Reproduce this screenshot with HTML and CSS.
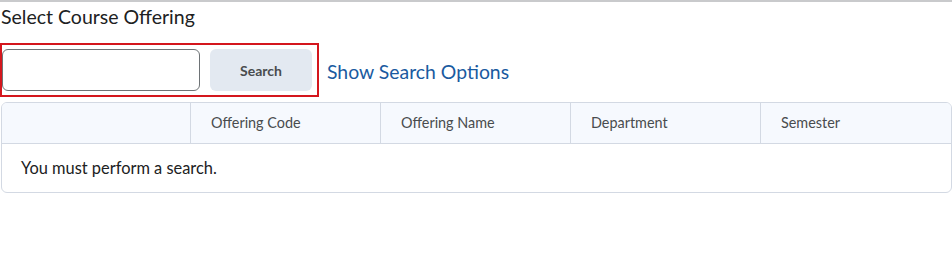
FILE: index.html
```html
<!DOCTYPE html>
<html>
<head>
<meta charset="utf-8">
<link rel="stylesheet" href="styles.css">
</head>
<body>
<div class="page">
  <h1 class="title">Select Course Offering</h1>
  <div class="search-row">
    <div class="search-box">
      <input class="search-input" type="text">
      <button class="search-btn">Search</button>
    </div>
    <a class="options-link" href="#">Show Search Options</a>
  </div>
  <div class="table">
    <div class="thead">
      <div class="th"></div>
      <div class="th">Offering Code</div>
      <div class="th">Offering Name</div>
      <div class="th">Department</div>
      <div class="th">Semester</div>
    </div>
    <div class="tbody">You must perform a search.</div>
  </div>
</div>
</body>
</html>
```
FILE: styles.css
```css
* { box-sizing: border-box; }
html, body { margin: 0; padding: 0; background: #fff; }
body { font-family: Lato, "Open Sans", sans-serif; color: #202122; }
.page { border-top: 2px solid #c9cacc; width: 952px; height: 261px; }
.title { margin: 0; padding: 3px 0 0 1px; font-size: 19.5px; font-weight: 400; line-height: 24px; color: #202122; }
.search-row { display: flex; align-items: center; margin-top: 14px; }
.search-box { display: flex; align-items: center; gap: 10px; border: 2px solid #d4161d; width: 319px; height: 54px; padding: 0 5px 0 0; }
.search-input { width: 198px; height: 42px; margin: 0; border: 1px solid #6e7376; border-radius: 6px; font-family: inherit; font-size: 16px; outline: none; }
.search-btn { width: 102px; height: 42px; border: none; border-radius: 6px; background: #e3e9f1; font-family: inherit; font-weight: 700; font-size: 14px; color: #494c4e; padding: 0; }
.options-link { margin-left: 8px; margin-top: 2px; font-size: 19.4px; color: #1a5aa0; text-decoration: none; }
.table { margin: 5px 0 0 1px; border: 1px solid #d3d9e3; border-radius: 6px; overflow: hidden; }
.thead { display: grid; grid-template-columns: 188px 190px 190px 190px 1fr; background: #f6f9fe; border-bottom: 1px solid #d3d9e3; height: 41px; }
.th { border-left: 1px solid #d3d9e3; padding: 0 20px; font-size: 14.4px; line-height: 40px; color: #494c4e; }
.th:first-child { border-left: none; }
.tbody { padding: 0 19px; height: 48px; line-height: 48px; font-size: 16.4px; color: #202122; }
```
